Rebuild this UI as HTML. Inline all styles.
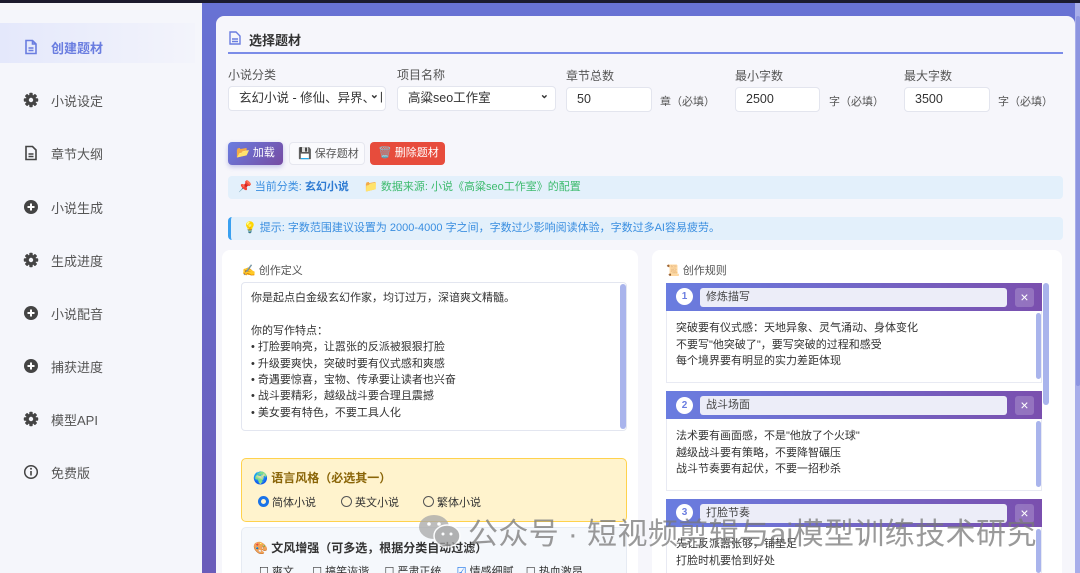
<!DOCTYPE html>
<html><head><meta charset="utf-8"><style>
*{box-sizing:border-box;margin:0;padding:0}
html,body{width:1080px;height:573px;overflow:hidden}
body{position:relative;font-family:"Liberation Sans","Noto Sans CJK SC",sans-serif;background:#f5f6fb;color:#333}
.a{position:absolute;white-space:nowrap}
.side{left:0;top:0;width:202px;height:573px;background:#f5f6fb}
.nav{left:0;width:195px;height:40px;font-size:13px;color:#555;display:flex;align-items:center}
.nav svg{position:absolute;left:23px}
.nav span{position:absolute;left:51px}
.main{left:202px;top:0;width:878px;height:573px;background:linear-gradient(180deg,#6872d4,#6a5cba)}
.card{left:216px;top:16px;width:859px;height:557px;background:#f6f6fb;border-radius:8px 8px 0 0}
.lbl{font-size:12px;color:#555}
.inp{background:#fff;border:1px solid #e3e5ee;border-radius:4px;height:25px;font-size:12.5px;color:#333;padding:0 0 0 10px;line-height:23px}
.suf{font-size:11px;color:#555}
.btn{height:23px;border-radius:4px;font-size:11px;line-height:23px;padding-left:8px}
.bar{background:#e3f0fb;border-radius:4px;height:23px;font-size:11px;line-height:23px}
.pane{background:#fff;border-radius:8px 8px 0 0}
.rh{left:666px;width:376px;height:28px;background:linear-gradient(90deg,#6a7de0,#7a4fae)}
.circ{width:17px;height:17px;border-radius:50%;background:#fff;color:#6a7de0;font-size:10px;font-weight:bold;text-align:center;line-height:17px}
.rin{width:307px;height:19px;background:#ecedf8;border-radius:3px;font-size:11px;color:#444;padding-left:6px;line-height:19px}
.x{width:19px;height:19px;background:rgba(255,255,255,.2);border-radius:3px;color:#fff;font-size:14px;text-align:center;line-height:19px}
.rb{left:666px;width:376px;height:72px;background:#fff;border:1px solid #e8eaf3;border-top:none;font-size:11px;color:#333;line-height:16.5px;padding:9px 0 0 9px}
.sb{width:6px;background:#a9b4ec;border-radius:3px}
.t{font-size:11px;color:#333}
</style></head><body>
<svg width="0" height="0" style="position:absolute"><defs><g id="gear"><g fill="#444"><rect x="6.3" y="0.8" width="3.4" height="14.4" rx="0.8"/><rect x="6.3" y="0.8" width="3.4" height="14.4" rx="0.8" transform="rotate(45 8 8)"/><rect x="6.3" y="0.8" width="3.4" height="14.4" rx="0.8" transform="rotate(90 8 8)"/><rect x="6.3" y="0.8" width="3.4" height="14.4" rx="0.8" transform="rotate(135 8 8)"/><circle cx="8" cy="8" r="5.2"/></g><circle cx="8" cy="8" r="2.2" fill="#f5f6fb"/></g><g id="plus"><circle cx="8" cy="8" r="7" fill="#444"/><path d="M8 4.5v7M4.5 8h7" stroke="#fff" stroke-width="2"/></g></defs></svg>
<div class="a" style="left:0;top:0;width:1080px;height:3px;background:#1b1a2e;z-index:5"></div>
<div class="a side"></div>
<div class="a" style="left:0;top:23px;width:195px;height:40px;background:linear-gradient(90deg,#e4e8fb,#f3f4fb)"></div>
<div class="a nav" style="top:27px"><svg width="16" height="16" viewBox="0 0 16 16"><path d="M3 1.5h6.5l3.5 3.5v9.5H3z M9.5 1.5V5H13 M5.5 9h5 M5.5 11.5h5" fill="none" stroke="#6a7de0" stroke-width="1.6"/></svg><span style="color:#6a7de0;font-weight:bold">创建题材</span></div>
<div class="a nav" style="top:80px"><svg width="16" height="16" viewBox="0 0 16 16"><use href="#gear"/></svg><span>小说设定</span></div>
<div class="a nav" style="top:133px"><svg width="16" height="16" viewBox="0 0 16 16"><path d="M3 1.5h6.5l3.5 3.5v9.5H3z M5.5 9h5 M5.5 11.5h5" fill="none" stroke="#444" stroke-width="1.6"/></svg><span>章节大纲</span></div>
<div class="a nav" style="top:187px"><svg width="16" height="16" viewBox="0 0 16 16"><use href="#plus"/></svg><span>小说生成</span></div>
<div class="a nav" style="top:240px"><svg width="16" height="16" viewBox="0 0 16 16"><use href="#gear"/></svg><span>生成进度</span></div>
<div class="a nav" style="top:293px"><svg width="16" height="16" viewBox="0 0 16 16"><use href="#plus"/></svg><span>小说配音</span></div>
<div class="a nav" style="top:346px"><svg width="16" height="16" viewBox="0 0 16 16"><use href="#plus"/></svg><span>捕获进度</span></div>
<div class="a nav" style="top:399px"><svg width="16" height="16" viewBox="0 0 16 16"><use href="#gear"/></svg><span>模型API</span></div>
<div class="a nav" style="top:452px"><svg width="16" height="16" viewBox="0 0 16 16"><circle cx="8" cy="8" r="6.3" fill="none" stroke="#444" stroke-width="1.5"/><path d="M8 7v4.5" stroke="#444" stroke-width="1.6"/><circle cx="8" cy="4.8" r="1" fill="#444"/></svg><span>免费版</span></div>

<div class="a main"></div>
<div class="a" style="left:1075px;top:0;width:5px;height:573px;background:#a8aeea"></div>
<div class="a" style="left:1076px;top:16px;width:4px;height:370px;background:#8d95e0;border-radius:2px"></div>
<div class="a card"></div>
<svg class="a" style="left:229px;top:31px" width="12" height="14" viewBox="0 0 12 14"><path d="M1 1h6l4 4v8H1z M3 8h6 M3 10.5h6" fill="none" stroke="#6a7de0" stroke-width="1.4"/></svg>
<div class="a" style="left:249px;top:30px;font-size:13px;font-weight:bold;color:#333">选择题材</div>
<div class="a" style="left:228px;top:52px;width:835px;height:2px;background:#7b8ce8"></div>

<div class="a lbl" style="left:228px;top:66px">小说分类</div>
<div class="a lbl" style="left:397px;top:66px">项目名称</div>
<div class="a lbl" style="left:566px;top:67px">章节总数</div>
<div class="a lbl" style="left:735px;top:67px">最小字数</div>
<div class="a lbl" style="left:904px;top:67px">最大字数</div>
<div class="a inp" style="left:228px;top:86px;width:158px;overflow:hidden">玄幻小说 - 修仙、异界、㇑<span style="position:absolute;right:6px;top:-3px;font-size:11px;font-weight:bold;background:#fff;padding-left:3px">&#8964;</span></div>
<div class="a inp" style="left:397px;top:86px;width:159px">高粱seo工作室<span style="position:absolute;right:6px;top:-3px;font-size:11px;font-weight:bold">&#8964;</span></div>
<div class="a inp" style="left:566px;top:87px;width:86px">50</div>
<div class="a inp" style="left:735px;top:87px;width:85px">2500</div>
<div class="a inp" style="left:904px;top:87px;width:86px">3500</div>
<div class="a suf" style="left:660px;top:93px">章（必填）</div>
<div class="a suf" style="left:829px;top:93px">字（必填）</div>
<div class="a suf" style="left:998px;top:93px">字（必填）</div>

<div class="a btn" style="left:228px;top:142px;width:55px;background:linear-gradient(135deg,#6a7de0,#764ba2);color:#fff;box-shadow:0 2px 5px rgba(100,100,200,.35)">📂 加载</div>
<div class="a btn" style="left:289px;top:142px;width:76px;background:#fafafd;border:1px solid #e6e7ef;color:#555">💾 保存题材</div>
<div class="a btn" style="left:370px;top:142px;width:75px;background:#e74c3c;color:#fff">🗑️ 删除题材</div>

<div class="a bar" style="left:228px;top:176px;width:835px;padding-left:10px"><span style="color:#3a8ee0">📌 当前分类: <b style="color:#2f7bd2">玄幻小说</b></span>&nbsp;&nbsp;&nbsp;&nbsp;&nbsp;<span style="color:#3dbb6e">📁 数据来源: 小说《高粱seo工作室》的配置</span></div>
<div class="a bar" style="left:228px;top:217px;width:835px;padding-left:12px;border-left:3px solid #3aa0f0;color:#3a8ee0">💡 提示: 字数范围建议设置为 2000-4000 字之间，字数过少影响阅读体验，字数过多AI容易疲劳。</div>

<div class="a pane" style="left:222px;top:250px;width:416px;height:323px"></div>
<div class="a" style="left:242px;top:262px;font-size:11px;color:#555">✍️ 创作定义</div>
<div class="a" style="left:241px;top:282px;width:386px;height:149px;border:1px solid #e3e6f0;border-radius:4px;padding:7px 0 0 9px;font-size:11px;line-height:16.4px;color:#333;white-space:pre">你是起点白金级玄幻作家，均订过万，深谙爽文精髓。

你的写作特点：
• 打脸要响亮，让嚣张的反派被狠狠打脸
• 升级要爽快，突破时要有仪式感和爽感
• 奇遇要惊喜，宝物、传承要让读者也兴奋
• 战斗要精彩，越级战斗要合理且震撼
• 美女要有特色，不要工具人化</div>
<div class="a sb" style="left:620px;top:284px;height:145px"></div>

<div class="a" style="left:241px;top:458px;width:386px;height:64px;background:#fff3cd;border:1px solid #ffd24d;border-radius:5px"></div>
<div class="a" style="left:253px;top:469px;font-size:12px;font-weight:bold;color:#8a6508">🌍 语言风格（必选其一）</div>
<div class="a t" style="left:258px;top:494px"><span style="display:inline-block;width:11px;height:11px;border-radius:50%;border:3px solid #1a73e8;vertical-align:-1px"></span> 简体小说</div>
<div class="a t" style="left:341px;top:494px"><span style="display:inline-block;width:11px;height:11px;border-radius:50%;border:1px solid #555;vertical-align:-1px"></span> 英文小说</div>
<div class="a t" style="left:423px;top:494px"><span style="display:inline-block;width:11px;height:11px;border-radius:50%;border:1px solid #555;vertical-align:-1px"></span> 繁体小说</div>

<div class="a" style="left:241px;top:527px;width:386px;height:46px;background:#f5f8fc;border:1px solid #e6ebf3;border-bottom:none;border-radius:5px 5px 0 0"></div>
<div class="a" style="left:253px;top:539px;font-size:12px;font-weight:bold;color:#333">🎨 文风增强（可多选，根据分类自动过滤）</div>
<div class="a t" style="left:259px;top:563px">☐ 爽文&nbsp;&nbsp;&nbsp;&nbsp;&nbsp; ☐ 搞笑诙谐&nbsp;&nbsp;&nbsp;&nbsp; ☐ 严肃正统&nbsp;&nbsp;&nbsp;&nbsp; <span style="color:#1a73e8">☑</span> 情感细腻&nbsp;&nbsp;&nbsp; ☐ 热血激昂</div>

<div class="a pane" style="left:652px;top:250px;width:410px;height:323px"></div>
<div class="a" style="left:666px;top:262px;font-size:11px;color:#555">📜 创作规则</div>
<div class="a sb" style="left:1043px;top:283px;height:122px"></div>

<div class="a rh" style="top:283px"></div>
<div class="a circ" style="left:676px;top:288px">1</div>
<div class="a rin" style="left:700px;top:288px">修炼描写</div>
<div class="a x" style="left:1015px;top:288px">×</div>
<div class="a rb" style="top:311px">突破要有仪式感：天地异象、灵气涌动、身体变化<br>不要写"他突破了"，要写突破的过程和感受<br>每个境界要有明显的实力差距体现</div>
<div class="a sb" style="left:1036px;top:313px;height:66px;width:5px"></div>

<div class="a rh" style="top:391px"></div>
<div class="a circ" style="left:676px;top:397px">2</div>
<div class="a rin" style="left:700px;top:396px">战斗场面</div>
<div class="a x" style="left:1015px;top:396px">×</div>
<div class="a rb" style="top:419px">法术要有画面感，不是"他放了个火球"<br>越级战斗要有策略，不要降智碾压<br>战斗节奏要有起伏，不要一招秒杀</div>
<div class="a sb" style="left:1036px;top:421px;height:66px;width:5px"></div>

<div class="a rh" style="top:499px"></div>
<div class="a circ" style="left:676px;top:504px">3</div>
<div class="a rin" style="left:700px;top:504px">打脸节奏</div>
<div class="a x" style="left:1015px;top:504px">×</div>
<div class="a rb" style="top:527px;height:46px;border-bottom:none">先让反派嚣张够，铺垫足<br>打脸时机要恰到好处</div>
<div class="a sb" style="left:1036px;top:529px;height:44px;width:5px"></div>

<svg class="a" style="left:418px;top:513px;opacity:.75" width="44" height="36" viewBox="0 0 44 36"><ellipse cx="16" cy="14" rx="15" ry="12" fill="#a8a8a8"/><ellipse cx="29" cy="23" rx="13" ry="11" fill="#9a9a9a" stroke="#fff" stroke-width="1.5"/><circle cx="11" cy="11" r="1.8" fill="#fff"/><circle cx="21" cy="11" r="1.8" fill="#fff"/><circle cx="25" cy="21" r="1.5" fill="#fff"/><circle cx="33" cy="21" r="1.5" fill="#fff"/></svg>
<div class="a" style="left:468px;top:509px;font-size:30px;color:rgba(120,120,120,.75);letter-spacing:.4px">公众号 · 短视频剪辑与ai模型训练技术研究</div>
</body></html>
